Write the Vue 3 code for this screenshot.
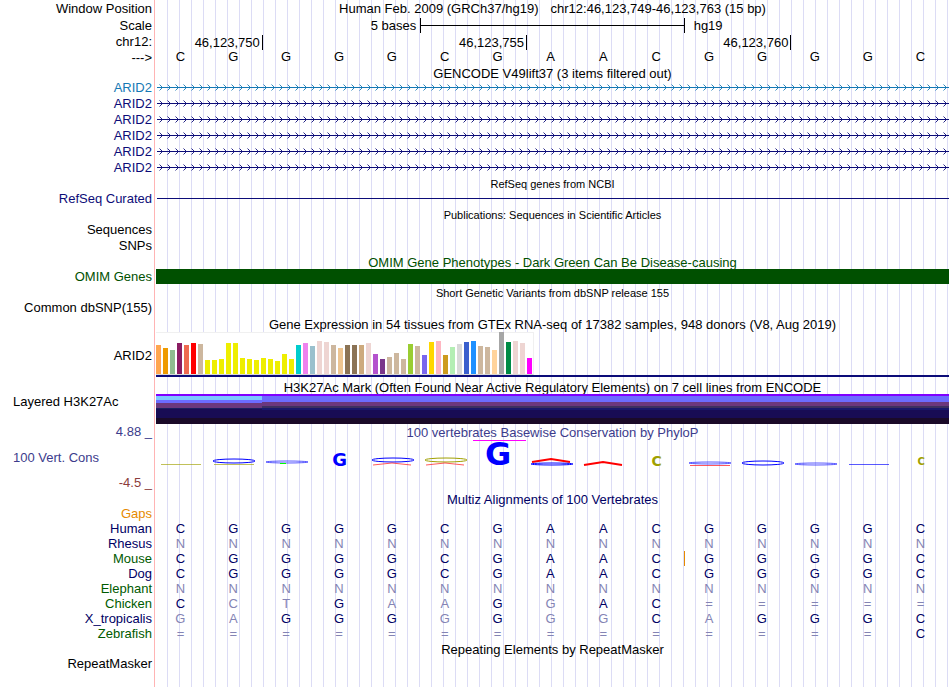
<script setup>
const reference = 'CGGGGCGAACGGGGC'
const bases = reference.split('')

const ticks = ['46,123,750', '46,123,755', '46,123,760']
const genes = ['canonical', 'coding', 'coding', 'coding', 'coding', 'coding']

const tissues = [
  [29, '#ffa54f'], [26, '#ee9a00'], [24, '#8fbc8f'], [31, '#8b1c62'], [29, '#ee6a50'],
  [31, '#ff0000'], [30, '#cdb79e'], [14, '#eeee00'], [14, '#eeee00'], [15, '#eeee00'],
  [31, '#eeee00'], [31, '#eeee00'], [16, '#eeee00'], [15, '#eeee00'], [14, '#eeee00'],
  [16, '#eeee00'], [15, '#eeee00'], [13, '#eeee00'], [20, '#eeee00'], [15, '#eeee00'],
  [29, '#00cdcd'], [31, '#ee82ee'], [28, '#9ac0cd'], [33, '#eed5d2'], [32, '#eed5d2'],
  [29, '#cdb79e'], [26, '#eec591'], [29, '#8b7355'], [29, '#8b7355'], [29, '#cdaa7d'],
  [31, '#eed5d2'], [20, '#b452cd'], [15, '#7a378b'], [17, '#cdb79e'], [21, '#cdb79e'],
  [15, '#cdb79e'], [30, '#9acd32'], [28, '#cdb79e'], [19, '#7a67ee'], [32, '#ffd700'],
  [33, '#ffb6c1'], [19, '#cd9b1d'], [27, '#b4eeb4'], [30, '#d9d9d9'], [32, '#3a5fcd'],
  [33, '#1e90ff'], [28, '#cdb79e'], [27, '#cdb79e'], [24, '#ffd39b'], [42, '#a6a6a6'],
  [32, '#008b45'], [33, '#eed5d2'], [31, '#eed5d2'], [16, '#ff00ff'],
]

const blue = '#0000ff'
const red = '#ff0000'
const olive = '#a0a000'

// One entry per base: readable scores carry a letter, near-zero scores only flat marks.
const scores = [
  { marks: [{ kind: 'line', y: 24, color: olive, soft: true }] },
  { marks: [{ kind: 'ring', y: 21, r: 2, color: blue }, { kind: 'line', y: 24, color: olive, soft: true }] },
  { marks: [{ kind: 'ring', y: 22, r: 1, color: blue, soft: true }, { kind: 'dot', y: 23, color: '#00ff00' }] },
  { letter: 'G', size: 'medium', tone: 'blue' },
  { marks: [{ kind: 'ring', y: 20, r: 2, color: blue }, { kind: 'tent', y: 23, h: 2, color: red, soft: true }] },
  { marks: [{ kind: 'ring', y: 20, r: 2, color: olive }, { kind: 'tent', y: 23, h: 2, color: red, soft: true }] },
  { letter: 'G', size: 'large', tone: 'blue', clipped: true },
  { marks: [{ kind: 'tent', y: 19, h: 3, color: red }, { kind: 'ring', y: 24, r: 1, color: blue }] },
  { marks: [{ kind: 'tent', y: 22, h: 3, color: red }] },
  { letter: 'C', size: 'small', tone: 'olive' },
  { marks: [{ kind: 'ring', y: 23, r: 1, color: blue, soft: true }, { kind: 'line', y: 25, color: red, soft: true }] },
  { marks: [{ kind: 'ring', y: 23, r: 2, color: blue }] },
  { marks: [{ kind: 'ring', y: 24, r: 1, color: blue, soft: true }] },
  { marks: [{ kind: 'line', y: 24, color: blue, soft: true }] },
  { letter: 'C', size: 'tiny', tone: 'olive' },
]

const species = [
  { name: 'Human', seq: 'CGGGGCGAACGGGGC', tone: 'navy' },
  { name: 'Rhesus', seq: 'NNNNNNNNNNNNNNN', tone: 'navy' },
  { name: 'Mouse', seq: 'CGGGGCGAACGGGGC', tone: 'forest', insertAfter: 9 },
  { name: 'Dog', seq: 'CGGGGCGAACGGGGC', tone: 'navy' },
  { name: 'Elephant', seq: 'NNNNNNNNNNNNNNN', tone: 'forest' },
  { name: 'Chicken', seq: 'CCTGAAGGAC=====', tone: 'forest' },
  { name: 'X_tropicalis', seq: 'GAGGGGGGGCAGGGC', tone: 'navy' },
  { name: 'Zebrafish', seq: '==============C', tone: 'forest' },
]
</script>

<template>
  <main class="browser">
    <div class="row ruler">
      <span class="label">Window Position</span>
      <div class="position">
        <span>Human Feb. 2009 (GRCh37/hg19)</span>
        <span>chr12:46,123,749-46,123,763 (15 bp)</span>
      </div>
    </div>
    <div class="row ruler">
      <span class="label">Scale</span>
      <div class="track scale">
        <span class="scale-size">5 bases</span>
        <span class="scale-bar"></span>
        <span class="scale-db">hg19</span>
      </div>
    </div>
    <div class="row">
      <span class="label">chr12:</span>
      <div class="track ticks">
        <span v-for="t in ticks" :key="t" class="tick">{{ t }}</span>
      </div>
    </div>
    <div class="row">
      <span class="label">---&gt;</span>
      <div class="track bases">
        <span v-for="(b, i) in bases" :key="i">{{ b }}</span>
      </div>
    </div>

    <h2 class="title snug">GENCODE V49lift37 (3 items filtered out)</h2>
    <div v-for="(g, i) in genes" :key="i" class="row" :class="g">
      <span class="label">ARID2</span>
      <svg class="intron" height="16" aria-hidden="true">
        <defs>
          <pattern :id="'strand' + i" width="8" height="16" patternUnits="userSpaceOnUse">
            <path d="M2.5 4.5 L5.5 7.5 L2.5 10.5" fill="none" stroke="currentColor" stroke-width="0.9" />
            <rect y="7" width="8" height="1" fill="currentColor" />
          </pattern>
        </defs>
        <rect width="100%" height="16" :fill="'url(#strand' + i + ')'" />
      </svg>
    </div>

    <h2 class="title minor">RefSeq genes from NCBI</h2>
    <div class="row coding">
      <span class="label">RefSeq Curated</span>
      <div class="track refseq"></div>
    </div>

    <h2 class="title minor">Publications: Sequences in Scientific Articles</h2>
    <div class="row"><span class="label">Sequences</span></div>
    <div class="row"><span class="label">SNPs</span></div>

    <h2 class="title omim-title">OMIM Gene Phenotypes - Dark Green Can Be Disease-causing</h2>
    <div class="row omim">
      <span class="label">OMIM Genes</span>
      <div class="track omim-bar"></div>
    </div>

    <h2 class="title minor">Short Genetic Variants from dbSNP release 155</h2>
    <div class="row"><span class="label">Common dbSNP(155)</span></div>

    <h2 class="title wide">Gene Expression in 54 tissues from GTEx RNA-seq of 17382 samples, 948 donors (V8, Aug 2019)</h2>
    <div class="row">
      <span class="label">ARID2</span>
      <div class="track gtex">
        <div class="tissues">
          <span
            v-for="([h, c], i) in tissues"
            :key="i"
            class="tissue"
            :style="{ height: h + 'px', background: c }"
          ></span>
        </div>
      </div>
    </div>

    <h2 class="title snug">H3K27Ac Mark (Often Found Near Active Regulatory Elements) on 7 cell lines from ENCODE</h2>
    <div class="row">
      <span class="label left">Layered H3K27Ac</span>
      <div class="track histone">
        <div class="layers first"></div>
        <div class="layers rest"></div>
      </div>
    </div>

    <div class="row phylo">
      <span class="label">4.88 _</span>
      <h2 class="title wide inline">100 vertebrates Basewise Conservation by PhyloP</h2>
    </div>
    <div class="row phylo">
      <div class="limits">
        <span class="label left">100 Vert. Cons</span>
        <span class="label negative">-4.5 _</span>
      </div>
      <div class="track logo">
        <div v-for="(s, i) in scores" :key="i" class="score" :class="{ clipped: s.clipped }">
          <span v-if="s.letter" class="letter" :class="[s.size, s.tone]">{{ s.letter }}</span>
          <svg v-else viewBox="0 0 53 26" width="53" height="26" aria-hidden="true">
            <g v-for="(m, j) in s.marks" :key="j" :opacity="m.soft ? 0.65 : 1">
              <ellipse
                v-if="m.kind === 'ring'"
                cx="27" :cy="m.y" rx="21" :ry="m.r"
                fill="none" :stroke="m.color"
              />
              <path
                v-else-if="m.kind === 'tent'"
                :d="`M7 ${m.y + m.h} L26 ${m.y} L45 ${m.y + m.h}`"
                fill="none" :stroke="m.color" :stroke-width="m.h > 2 ? 2 : 1"
              />
              <rect v-else-if="m.kind === 'dot'" x="20" :y="m.y" width="6" height="1" :fill="m.color" />
              <rect v-else x="7" :y="m.y" width="40" height="1" :fill="m.color" />
            </g>
          </svg>
        </div>
      </div>
    </div>

    <h2 class="title wide navy">Multiz Alignments of 100 Vertebrates</h2>
    <table class="alignment">
      <tbody>
        <tr class="gaps">
          <th scope="row">Gaps</th>
          <td v-for="i in 15" :key="i"></td>
        </tr>
        <tr v-for="s in species" :key="s.name">
          <th scope="row" :class="s.tone">{{ s.name }}</th>
          <td
            v-for="(b, i) in s.seq.split('')"
            :key="i"
            :class="{ match: b === reference[i], insertion: s.insertAfter === i }"
          >{{ b }}</td>
        </tr>
      </tbody>
    </table>

    <h2 class="title">Repeating Elements by RepeatMasker</h2>
    <div class="row"><span class="label">RepeatMasker</span></div>
  </main>
</template>

<style>
body {
  margin: 0;
  background: #fff;
}
</style>

<style scoped>
.browser {
  --gutter: 156px;
  box-sizing: border-box;
  min-height: 100vh;
  padding-right: 1px;
  font: 13px/16px "Liberation Sans", Arial, sans-serif;
  color: #000;
  background:
    linear-gradient(#ffb4b4, #ffb4b4) 154px 0 / 1px 100% no-repeat,
    repeating-linear-gradient(90deg, #dcdcf5 0 1px, transparent 1px 12px) 167px 0 / 100% 100% no-repeat;
}
.row {
  display: grid;
  grid-template-columns: var(--gutter) minmax(0, 1fr);
  align-items: center;
  min-height: 16px;
}
.ruler {
  min-height: 17px;
}
.label {
  padding-right: 4px;
  text-align: right;
  white-space: nowrap;
}
.label.left {
  align-self: start;
  padding-left: 13px;
  text-align: left;
}
.title {
  margin: 0 0 0 var(--gutter);
  padding-top: 2px;
  font-size: 13px;
  font-weight: normal;
  line-height: 13px;
  text-align: center;
  white-space: nowrap;
}
.title.minor {
  font-size: 11px;
}
.title.snug {
  line-height: 12px;
}
.title.wide {
  line-height: 14px;
}
.title.inline {
  margin: 0;
}
.position {
  display: flex;
  justify-content: center;
  gap: 12px;
  white-space: nowrap;
}
.scale {
  display: grid;
  grid-template-columns: repeat(3, minmax(0, 1fr));
  align-items: center;
}
.scale-size {
  padding-right: 4px;
  text-align: right;
}
.scale-bar {
  height: 15px;
  border: solid #000;
  border-width: 0 1px;
  background: linear-gradient(#000, #000) 0 7px / 100% 1px no-repeat;
}
.scale-db {
  padding-left: 9px;
}
.ticks {
  display: grid;
  grid-template-columns: 2fr 5fr 5fr 3fr;
}
.tick {
  height: 15px;
  margin-right: -1px;
  padding-right: 2px;
  border-right: 1px solid #000;
  text-align: right;
}
.bases,
.logo {
  display: grid;
  grid-template-columns: repeat(15, minmax(0, 1fr));
}
.bases {
  line-height: 14px;
  align-self: start;
}
.bases span {
  padding-right: 4px;
  text-align: center;
}
.canonical {
  color: #1478b4;
}
.coding {
  color: #0c0c78;
}
.intron {
  display: block;
  box-sizing: border-box;
  width: 100%;
  padding-left: 1px;
}
.refseq {
  height: 1px;
  margin: 0 0 2px 1px;
  background: #0c0c78;
}
.omim-title,
.omim {
  color: #005000;
}
.omim-bar {
  align-self: start;
  height: 15px;
  background: #005000;
}
.gtex {
  height: 46px;
  align-self: start;
  margin-bottom: 2px;
}
.tissues {
  display: flex;
  align-items: flex-end;
  gap: 2px;
  box-sizing: border-box;
  width: max-content;
  height: 43px;
  padding-right: 1px;
  border-right: 1px solid #f0f0f0;
  border-bottom: 1px solid #d8d8d8;
  background: linear-gradient(#f0f0f0, #f0f0f0) 0 0 / 100% 1px no-repeat #fff;
}
.gtex::after {
  content: "";
  display: block;
  height: 2px;
  background: #0c0c78;
}
.tissue {
  width: 5px;
}
.histone {
  display: grid;
  grid-template-columns: 2fr 13fr;
  height: 30px;
}
.layers.first {
  background: linear-gradient(
    #8000ff 0 2px, #7dc8ff 2px 6px, #6c6cff 6px 9px, #6c387d 9px 14px,
    #182060 14px 15px, #180c54 15px 24px, #1a0a28 24px
  );
}
.layers.rest {
  background: linear-gradient(
    #8000ff 0 2px, #6c6cff 2px 8px, #6c387d 8px 12px, #3c3060 12px 14px,
    #18186c 14px 16px, #180c54 16px 24px, #1a0a28 24px
  );
}
.phylo {
  color: #3c3c8c;
}
.limits {
  display: grid;
  grid-template-rows: 35px 16px;
}
.limits .left {
  padding-top: 10px;
}
.negative {
  color: #8c3c3c;
}
.logo {
  align-self: start;
}
.score {
  display: flex;
  justify-content: center;
  align-items: flex-end;
  height: 26px;
  padding-right: 3px;
}
.score svg {
  flex: none;
}
.clipped {
  box-shadow: inset 0 1px #ff00ff;
}
.letter {
  font-family: "DejaVu Sans", sans-serif;
  font-weight: bold;
}
.letter.large {
  font-size: 32px;
  line-height: 24px;
}
.letter.medium {
  font-size: 18px;
  line-height: 13px;
}
.letter.small {
  font-size: 14px;
  line-height: 10px;
}
.letter.tiny {
  font-size: 10px;
  line-height: 8px;
}
.blue {
  color: #0000ff;
}
.olive {
  color: #a0a000;
}
.navy {
  color: #000064;
}
.forest {
  color: #005a00;
}
.alignment {
  width: 100%;
  table-layout: fixed;
  border-collapse: separate;
  border-spacing: 0;
  line-height: 15px;
}
.alignment th {
  width: var(--gutter);
  box-sizing: border-box;
  padding: 0 4px 0 0;
  font-weight: normal;
  text-align: right;
}
.alignment td {
  padding: 0 4px 0 0;
  color: #8484b4;
  text-align: center;
}
.alignment .match {
  color: #000064;
}
.alignment .insertion {
  padding-right: 3px;
  border-right: 1px solid #e68a00;
}
.gaps {
  line-height: 14px;
  color: #e68a00;
}
</style>
